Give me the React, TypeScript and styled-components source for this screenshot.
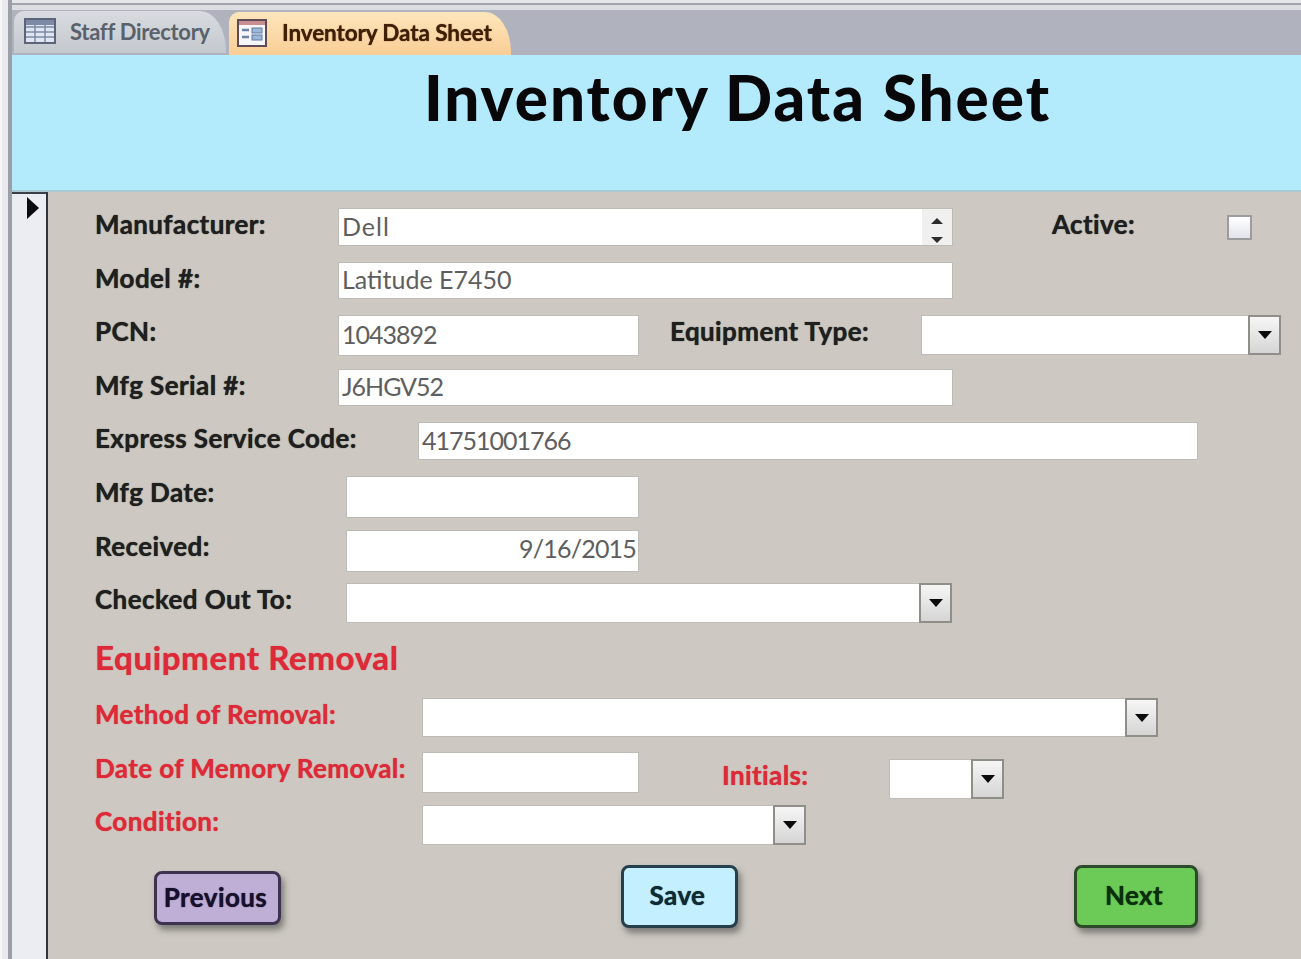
import React from "react";
import styled, { createGlobalStyle, css } from "styled-components";

const Global = createGlobalStyle`
  html, body {
    margin: 0;
    padding: 0;
    background: #cdc9c2;
  }
  body {
    font-family: Lato, "Open Sans", sans-serif;
  }
`;

const TableIcon = () => (
  <svg width="32" height="26" viewBox="0 0 32 26">
    <rect x="1" y="1" width="30" height="24" fill="#dfe6f2" stroke="#5b6478" strokeWidth="2" />
    <rect x="2" y="2" width="28" height="5" fill="#7c8aa6" />
    <path d="M11 2v22M21 2v22M2 9h28M2 14h28M2 19h28" stroke="#7d8aa3" strokeWidth="1.5" fill="none" />
  </svg>
);

const FormIcon = () => (
  <svg width="30" height="28" viewBox="0 0 30 28">
    <rect x="1" y="1" width="28" height="26" fill="#f6f6fa" stroke="#5f4a58" strokeWidth="2" />
    <rect x="2" y="2" width="26" height="4" fill="#c98d92" />
    <path d="M5 11h7M5 18h7" stroke="#6d84a8" strokeWidth="2.4" />
    <rect x="15" y="9" width="10" height="5" fill="#9db7d8" stroke="#5f7ba3" />
    <rect x="15" y="16" width="10" height="5" fill="#9db7d8" stroke="#5f7ba3" />
  </svg>
);

const Caret = () => (
  <svg width="14" height="8" viewBox="0 0 14 8">
    <path d="M0 0h14L7 8z" fill="#0b0b0b" />
  </svg>
);

const RecordArrow = () => (
  <svg width="14" height="22" viewBox="0 0 14 22">
    <path d="M1 0l12 11L1 22z" fill="#0c0c10" />
  </svg>
);

const Spinner = () => (
  <SpinBox>
    <svg width="12" height="6" viewBox="0 0 12 6">
      <path d="M6 0l6 6H0z" fill="#2c2c2c" />
    </svg>
    <svg width="12" height="6" viewBox="0 0 12 6">
      <path d="M0 0h12L6 6z" fill="#2c2c2c" />
    </svg>
  </SpinBox>
);

type Tone = "black" | "red";

const Row = ({
  label,
  labelW,
  tone = "black",
  children,
}: {
  label: string;
  labelW: number;
  tone?: Tone;
  children?: React.ReactNode;
}) => (
  <FormRow>
    <Label $w={labelW} $tone={tone}>
      {label}
    </Label>
    {children}
  </FormRow>
);

const App = () => {
  return (
    <Screen>
      <Global />
      <LeftEdge />
      <Main>
        <TabStrip>
          <Tab>
            <TableIcon />
            <span>Staff Directory</span>
          </Tab>
          <ActiveTab>
            <FormIcon />
            <span>Inventory Data Sheet</span>
          </ActiveTab>
        </TabStrip>
        <Header>
          <Title>Inventory Data Sheet</Title>
        </Header>
        <Body>
          <Selector>
            <RecordArrow />
          </Selector>
          <Form>
            <Row label="Manufacturer:" labelW={243}>
              <Field $w={615} $h={38} $track={1}>
                Dell
                <Spinner />
              </Field>
              <SideLabel $ml={99} $w={175}>
                Active:
              </SideLabel>
              <Check />
            </Row>
            <Row label="Model #:" labelW={243}>
              <Field $w={615} $h={37}>
                Latitude E7450
              </Field>
            </Row>
            <Row label="PCN:" labelW={243}>
              <Field $w={301} $h={41} $track={-1} $lift={0.5}>
                1043892
              </Field>
              <SideLabel $ml={31} $w={251}>
                Equipment Type:
              </SideLabel>
              <Field $w={360} $h={40}>
                <DropButton>
                  <Caret />
                </DropButton>
              </Field>
            </Row>
            <Row label="Mfg Serial #:" labelW={243}>
              <Field $w={615} $h={37} $track={-1}>
                J6HGV52
              </Field>
            </Row>
            <Row label="Express Service Code:" labelW={323}>
              <Field $w={780} $h={38} $track={-1}>
                41751001766
              </Field>
            </Row>
            <Row label="Mfg Date:" labelW={251}>
              <Field $w={293} $h={42} />
            </Row>
            <Row label="Received:" labelW={251}>
              <Field $w={293} $h={42} $right $track={-0.8} $lift={1.5}>
                9/16/2015
              </Field>
            </Row>
            <Row label="Checked Out To:" labelW={251}>
              <Field $w={606} $h={40}>
                <DropButton>
                  <Caret />
                </DropButton>
              </Field>
            </Row>
            <SectionTitle>Equipment Removal</SectionTitle>
            <Row label="Method of Removal:" labelW={327} tone="red">
              <Field $w={736} $h={39}>
                <DropButton>
                  <Caret />
                </DropButton>
              </Field>
            </Row>
            <Row label="Date of Memory Removal:" labelW={327} tone="red">
              <Field $w={217} $h={41} />
              <InitialsLabel>Initials:</InitialsLabel>
              <Field $w={115} $h={40} $raise={7}>
                <DropButton>
                  <Caret />
                </DropButton>
              </Field>
            </Row>
            <Row label="Condition:" labelW={327} tone="red">
              <Field $w={384} $h={40}>
                <DropButton>
                  <Caret />
                </DropButton>
              </Field>
            </Row>
            <Buttons>
              <ActionButton $bg="#bfaed6" $edge="#3d3350" $ink="#17102c" $w={127} $h={54} $top={6} $after={4}>
                Previous
              </ActionButton>
              <ActionButton $bg="#c4effe" $edge="#25404c" $ink="#0f2a33" $w={117} $h={63} $top={0}>
                Save
              </ActionButton>
              <ActionButton $bg="#6ccb57" $edge="#2d4a2a" $ink="#0b2f0b" $w={124} $h={63} $top={0}>
                Next
              </ActionButton>
            </Buttons>
          </Form>
        </Body>
      </Main>
    </Screen>
  );
};

export default App;

const labelText = css`
  font-size: 26px;
  line-height: 30px;
  font-weight: 700;
  letter-spacing: 0.4px;
  white-space: nowrap;
  text-shadow: 0 0 1px currentColor;
`;

const Screen = styled.div`
  display: flex;
  width: 1301px;
  height: 959px;
  overflow: hidden;
  filter: blur(0.7px);
`;

const LeftEdge = styled.div`
  flex: 0 0 12px;
  box-sizing: border-box;
  background: #e9e9ee;
  border-left: 2px solid #f7f7f7;
  border-right: 4px solid #9b9fa8;
`;

const Main = styled.div`
  flex: 1;
  display: flex;
  flex-direction: column;
  min-width: 0;
`;

const TabStrip = styled.div`
  flex: 0 0 55px;
  box-sizing: border-box;
  display: flex;
  align-items: flex-end;
  gap: 3px;
  padding-left: 2px;
  background: linear-gradient(#e6e6ea 0 3px, #a2a5ad 3px 5px, #dcdde2 5px 10px, #b0b3bd 10px);
`;

const Tab = styled.div`
  box-sizing: border-box;
  display: flex;
  align-items: center;
  width: 212px;
  height: 42px;
  margin-bottom: 2px;
  padding: 0 0 2px 10px;
  gap: 14px;
  border-radius: 10px 26px 0 0 / 10px 40px 0 0;
  background: linear-gradient(#d8dce0, #c4c9cf);
  color: #5b616b;
  font-size: 22px;
  font-weight: 700;
  letter-spacing: -0.3px;
  white-space: nowrap;
`;

const ActiveTab = styled(Tab)`
  width: 282px;
  height: 43px;
  margin-bottom: 0;
  padding-left: 8px;
  gap: 15px;
  background: linear-gradient(#fde6bb, #f9cd96);
  color: #3f1f06;
  font-size: 22.5px;
  letter-spacing: -0.1px;
  text-shadow: 0 0 1px currentColor;
`;

const Header = styled.header`
  flex: 0 0 137px;
  display: flex;
  justify-content: center;
  padding-left: 162px;
  background: #b3ebfd;
  border-bottom: 2px solid #a9c9d2;
  box-sizing: border-box;
`;

const Title = styled.h1`
  margin: 4px 0 0;
  color: #08080a;
  font-size: 62px;
  line-height: 76px;
  font-weight: 900;
  letter-spacing: 2px;
  white-space: nowrap;
`;

const Body = styled.div`
  flex: 1;
  display: flex;
  min-height: 0;
`;

const Selector = styled.div`
  flex: 0 0 36px;
  box-sizing: border-box;
  padding: 3px 0 0 14px;
  background: #ecedf3;
  border-top: 2px solid #3b3f47;
  border-right: 2px solid #30343c;
`;

const Form = styled.div`
  flex: 1;
  display: flex;
  flex-direction: column;
  padding: 16px 0 0 47px;
  background: #cdc9c2;
`;

const FormRow = styled.div`
  flex: 0 0 53.6px;
  display: flex;
  align-items: flex-start;
`;

const Label = styled.div<{ $w: number; $tone: Tone }>`
  flex: 0 0 ${(p) => p.$w}px;
  padding-top: 1px;
  color: ${(p) => (p.$tone === "red" ? "#dc2a38" : "#1f1f20")};
  ${labelText}
`;

const SideLabel = styled.div<{ $ml: number; $w: number }>`
  flex: 0 0 ${(p) => p.$w}px;
  margin-left: ${(p) => p.$ml}px;
  padding-top: 1px;
  color: #1f1f20;
  ${labelText}
`;

const InitialsLabel = styled.div`
  flex: 0 0 167px;
  margin-left: 83px;
  padding-top: 8px;
  color: #dc2a38;
  ${labelText}
`;

const Field = styled.div<{
  $w: number;
  $h: number;
  $right?: boolean;
  $raise?: number;
  $track?: number;
  $lift?: number;
}>`
  position: relative;
  flex: 0 0 ${(p) => p.$w}px;
  box-sizing: border-box;
  height: ${(p) => p.$h}px;
  margin-top: ${(p) => p.$raise ?? 0}px;
  padding: 0 2px 0 3px;
  background: #ffffff;
  border: 1px solid #bdbbb6;
  color: #5e5e5e;
  font-size: 25px;
  line-height: ${(p) => p.$h - 4 - 2 * (p.$lift ?? 0)}px;
  letter-spacing: ${(p) => p.$track ?? 0}px;
  text-align: ${(p) => (p.$right ? "right" : "left")};
  white-space: nowrap;
`;

const DropButton = styled.div`
  position: absolute;
  top: -1px;
  right: -1px;
  bottom: -1px;
  display: flex;
  align-items: center;
  justify-content: center;
  box-sizing: border-box;
  width: 33px;
  background: linear-gradient(#f6f6f6, #d5d5d5);
  border: 2px solid #8f8f8a;
`;

const SpinBox = styled.div`
  position: absolute;
  top: 0;
  right: 0;
  bottom: 0;
  display: flex;
  flex-direction: column;
  align-items: center;
  justify-content: space-between;
  box-sizing: border-box;
  width: 30px;
  padding: 9px 0 2px;
  background: #f0f0f0;
`;

const Check = styled.div`
  box-sizing: border-box;
  width: 25px;
  height: 25px;
  margin-top: 7px;
  background: linear-gradient(#ffffff, #e2e4ea);
  border: 2px solid #9c9c9c;
`;

const SectionTitle = styled.h2`
  flex: 0 0 61.5px;
  box-sizing: border-box;
  margin: 0;
  color: #dc2a38;
  font-size: 33px;
  line-height: 40px;
  font-weight: 700;
  letter-spacing: 0.65px;
  text-shadow: 0 0 1px currentColor;
`;

const Buttons = styled.div`
  display: flex;
  align-items: flex-start;
  gap: 336px;
  padding: 6px 0 0 59px;
`;

const ActionButton = styled.button<{
  $bg: string;
  $edge: string;
  $ink: string;
  $w: number;
  $h: number;
  $top: number;
  $after?: number;
}>`
  box-sizing: border-box;
  width: ${(p) => p.$w}px;
  height: ${(p) => p.$h}px;
  margin-top: ${(p) => p.$top}px;
  margin-right: ${(p) => p.$after ?? 0}px;
  padding: 0 4px 3px 0;
  background: ${(p) => p.$bg};
  border: 3px solid ${(p) => p.$edge};
  border-radius: 8px;
  box-shadow: 3px 5px 6px rgba(60, 60, 60, 0.55);
  color: ${(p) => p.$ink};
  font-family: inherit;
  ${labelText}
`;
